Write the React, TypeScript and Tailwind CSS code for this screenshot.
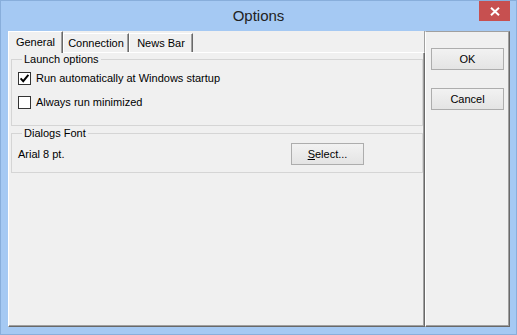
import React from 'react'

function CheckBox({ checked, label }: { checked?: boolean; label: string }) {
  return (
    <div className="flex h-[13px] items-center gap-[5px]">
      <div className="flex h-[13px] w-[13px] items-center justify-center border border-[#333333] bg-white">
        {checked && (
          <svg width="11" height="11" viewBox="0 0 11 11">
            <path d="M1.6 5.4 L4.2 8.2 L9.4 1.8" fill="none" stroke="#000" strokeWidth="1.9" />
          </svg>
        )}
      </div>
      <span className="leading-[13px]">{label}</span>
    </div>
  )
}

function Button({ children }: { children: React.ReactNode }) {
  return (
    <button className="flex h-[22px] w-[73px] items-center justify-center border border-[#adadad] bg-gradient-to-b from-[#f2f2f2] to-[#e4e4e4] text-[11px] leading-none text-black">
      {children}
    </button>
  )
}

export default function App() {
  return (
    <div className="flex h-[335px] w-[517px] flex-col border border-[#88aedb] bg-[#a5c9f3] font-['Liberation_Sans',Arial,sans-serif] text-[11px] text-black">
      {/* title bar */}
      <div className="flex h-[30px] items-start">
        <div className="flex h-[30px] flex-1 items-center justify-center pl-[37px] text-[15px] text-[#222222]">
          Options
        </div>
        <div className="mr-[6px] flex h-[20px] w-[31px] items-center justify-center bg-[#c75050]">
          <svg width="10" height="9" viewBox="0 0 10 9">
            <path d="M1 0.8 L9 8.2 M9 0.8 L1 8.2" stroke="#fff" strokeWidth="2" />
          </svg>
        </div>
      </div>

      <div className="flex h-[296px] pl-[7px] pr-[6px]">
        {/* tab control */}
        <div className="flex w-[417px] flex-col bg-[#f0f0f0]">
          <div className="flex h-[21px] items-end border-r border-[#a0a0a0]">
            <div className="relative z-10 -mb-px flex h-[22px] w-[55px] items-center justify-center border-l border-t border-r border-l-white border-t-white border-r-[#696969] bg-[#f0f0f0] pb-[1px] shadow-[inset_-1px_0_0_#a0a0a0]">
              General
            </div>
            <div className="flex h-[19px] w-[66px] items-center justify-center border-l border-t border-r border-l-white border-t-white border-r-[#696969] shadow-[inset_-1px_0_0_#a0a0a0]">
              Connection
            </div>
            <div className="flex h-[19px] w-[64px] items-center justify-center border-l border-t border-r border-l-white border-t-white border-r-[#696969] shadow-[inset_-1px_0_0_#a0a0a0]">
              News Bar
            </div>
          </div>

          <div className="flex flex-1 flex-col border border-b-[#696969] border-l-white border-r-[#696969] border-t-white pb-0 shadow-[inset_-1px_-1px_0_#a0a0a0]">
            <fieldset className="ml-[2px] mr-[1px] border border-[#d5d5d5] px-[6px] pb-[16px]">
              <legend className="ml-[4px] px-[2px] leading-[13px]">Launch options</legend>
              <div className="mt-[6px] flex flex-col gap-[11px]">
                <CheckBox checked label="Run automatically at Windows startup" />
                <CheckBox label="Always run minimized" />
              </div>
            </fieldset>

            <fieldset className="ml-[2px] mr-[1px] mt-[1px] border border-[#d5d5d5] px-[6px] pb-[7px]">
              <legend className="ml-[4px] px-[2px] leading-[13px]">Dialogs Font</legend>
              <div className="mt-[3px] flex items-center">
                <span>Arial 8 pt.</span>
                <div className="ml-auto mr-[52px]">
                  <Button>
                    <span>
                      <span className="underline">S</span>elect...
                    </span>
                  </Button>
                </div>
              </div>
            </fieldset>
          </div>
        </div>

        {/* side buttons */}
        <div className="flex w-[85px] flex-col gap-[18px] border-b border-l border-r border-t border-b-[#696969] border-l-white border-r-[#696969] border-t-[#a0a0a0] bg-[#f0f0f0] pl-[5px] pt-[16px] shadow-[inset_-1px_-1px_0_#a0a0a0]">
          <Button>OK</Button>
          <Button>Cancel</Button>
        </div>
      </div>
    </div>
  )
}
